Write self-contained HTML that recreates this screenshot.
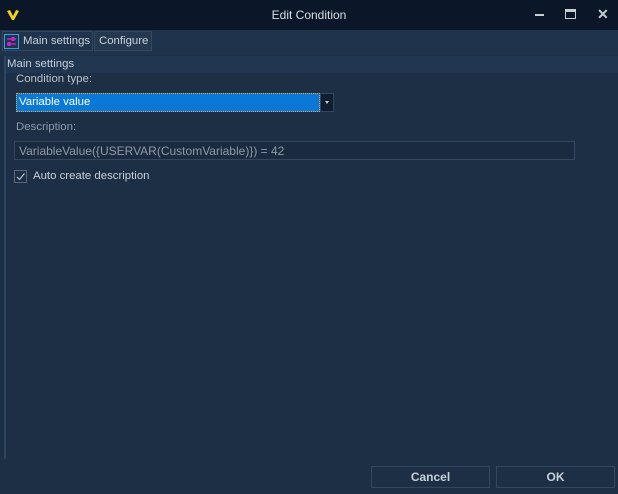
<!DOCTYPE html>
<html><head><style>
*{margin:0;padding:0;box-sizing:border-box}
body{width:618px;height:494px;background:#1d2f45;font-family:"Liberation Sans",sans-serif;font-size:12px;color:#c8d0da;position:relative;overflow:hidden}
.abs{position:absolute}
</style></head><body>
<div class="abs" style="left:0;top:0;width:618px;height:30px;background:#0b1729"></div>
<svg class="abs" style="left:6px;top:9px" width="14" height="12" viewBox="0 0 14 12"><path d="M1 2 L4 1 L7 7 L10 1 L13 2 L8 11 L6 11 Z" fill="#f2d21a"/></svg>
<div class="abs" style="left:0;top:8px;width:618px;text-align:center;color:#d8dde4;font-size:12px">Edit Condition</div>
<div class="abs" style="left:535px;top:14px;width:9px;height:2px;background:#c8cdd3"></div>
<div class="abs" style="left:565px;top:9px;width:11px;height:10px;border:1.5px solid #c8cdd3;border-top-width:3px"></div>
<div class="abs" style="left:597px;top:6px;color:#c8cdd3;font-size:14px;font-weight:bold">✕</div>
<div class="abs" style="left:0;top:30px;width:618px;height:25px;background:#1f344c"></div>
<div class="abs" style="left:2px;top:31px;width:91px;height:20px;border:1px solid #33475e;background:#1f344c"></div>
<div class="abs" style="left:4px;top:34px;width:15px;height:15px;border:1px solid #2aa7e0"></div>
<svg class="abs" style="left:5px;top:35px" width="13" height="13" viewBox="0 0 13 13"><path d="M2 4H11M2 9H11" stroke="#e020e0" stroke-width="1.3"/><rect x="7" y="2.5" width="2" height="3" fill="none" stroke="#e020e0"/><rect x="3" y="7.5" width="2" height="3" fill="none" stroke="#e020e0"/></svg>
<div class="abs" style="left:23px;top:35px;color:#c8d0da;font-size:11.4px">Main settings</div>
<div class="abs" style="left:94px;top:31px;width:58px;height:20px;border:1px solid #33475e;background:#24384f"></div>
<div class="abs" style="left:99px;top:35px;color:#c8d0da;font-size:11.4px">Configure</div>
<div class="abs" style="left:4px;top:56px;width:614px;height:17px;background:#213650"></div>
<div class="abs" style="left:4px;top:56px;width:2px;height:403px;background:#2c4560"></div>
<div class="abs" style="left:7px;top:58px;color:#c8d0da;font-size:11.4px">Main settings</div>
<div class="abs" style="left:16px;top:73px;color:#b8c2cc;font-size:11.4px">Condition type:</div>
<div class="abs" style="left:16px;top:93px;width:304px;height:19px;background:#0a78d7;border:1px dotted #f0a030"></div>
<div class="abs" style="left:19px;top:96px;color:#fff;font-size:11.4px">Variable value</div>
<div class="abs" style="left:320px;top:93px;width:14px;height:19px;background:#0f1e30;border:1px solid #33475e"></div>
<div class="abs" style="left:325px;top:101px;width:0;height:0;border-left:2px solid transparent;border-right:2px solid transparent;border-top:3px solid #ccc"></div>
<div class="abs" style="left:16px;top:121px;color:#8e9aa8;font-size:11.4px">Description:</div>
<div class="abs" style="left:14px;top:141px;width:561px;height:19px;background:#1a2b40;border:1px solid #33475e"></div>
<div class="abs" style="left:19px;top:144px;color:#8e9aa8">VariableValue({USERVAR(CustomVariable)}) = 42</div>
<div class="abs" style="left:14px;top:170px;width:13px;height:13px;border:1px solid #5a6878"></div>
<svg class="abs" style="left:15px;top:171px" width="11" height="11"><path d="M2 6 L4.5 8.5 L9.5 2.5" stroke="#c8d0da" fill="none" stroke-width="1"/></svg>
<div class="abs" style="left:33px;top:170px;color:#c8d0da;font-size:11.4px">Auto create description</div>
<div class="abs" style="left:371px;top:466px;width:119px;height:22px;border:1px solid #33475e"></div>
<div class="abs" style="left:371px;top:470px;width:119px;text-align:center;color:#c8d0da;font-weight:bold">Cancel</div>
<div class="abs" style="left:496px;top:466px;width:119px;height:22px;border:1px solid #33475e"></div>
<div class="abs" style="left:496px;top:470px;width:119px;text-align:center;color:#c8d0da;font-weight:bold">OK</div>
</body></html>
